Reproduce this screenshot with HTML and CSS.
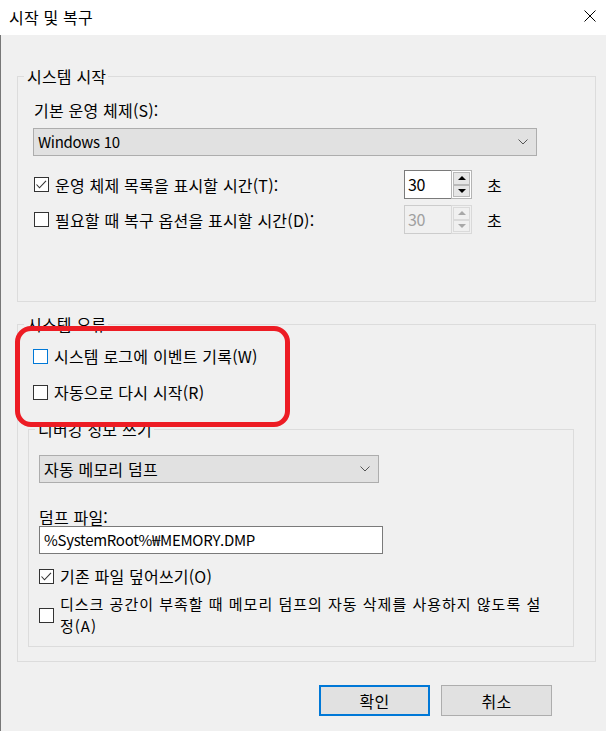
FILE: index.html
```html
<!DOCTYPE html>
<html lang="ko">
<head>
<meta charset="utf-8">
<title>시작 및 복구</title>
<link rel="stylesheet" href="styles.css">
</head>
<body>
<header class="titlebar">
  <span class="title">시작 및 복구</span>
  <svg class="close" width="12" height="12" viewBox="0 0 12 12"><path d="M0.5 0.5L11.5 11.5M11.5 0.5L0.5 11.5" stroke="#000" stroke-width="1" fill="none"/></svg>
</header>
<main class="content">
  <fieldset class="group group-start">
    <legend>시스템 시작</legend>
    <div class="field-label">기본 운영 체제(S):</div>
    <div class="combo combo-os">
      <span class="latin">Windows 10</span>
      <svg class="chev" width="10" height="6" viewBox="0 0 10 6"><path d="M0.5 0.5L5 5L9.5 0.5" stroke="#555" stroke-width="1" fill="none"/></svg>
    </div>
    <div class="spin-row first">
      <div class="check">
        <span class="box"><svg width="13" height="13" viewBox="0 0 13 13"><path d="M1.5 6.5L4.5 9.8L11 2.8" stroke="#333" stroke-width="1.1" fill="none"/></svg></span>
        <span>운영 체제 목록을 표시할 시간(T):</span>
      </div>
      <div class="spin">
        <span class="spin-value latin">30</span>
        <span class="spin-btns">
          <span class="spin-btn"><span class="tri-up"></span></span>
          <span class="spin-btn"><span class="tri-down"></span></span>
        </span>
      </div>
      <span class="unit">초</span>
    </div>
    <div class="spin-row">
      <div class="check">
        <span class="box"></span>
        <span>필요할 때 복구 옵션을 표시할 시간(D):</span>
      </div>
      <div class="spin disabled">
        <span class="spin-value latin">30</span>
        <span class="spin-btns">
          <span class="spin-btn"><span class="tri-up"></span></span>
          <span class="spin-btn"><span class="tri-down"></span></span>
        </span>
      </div>
      <span class="unit">초</span>
    </div>
  </fieldset>

  <fieldset class="group group-error">
    <legend>시스템 오류</legend>
    <div class="check check-row">
      <span class="box hover"></span>
      <span>시스템 로그에 이벤트 기록(W)</span>
    </div>
    <div class="check check-row second">
      <span class="box"></span>
      <span>자동으로 다시 시작(R)</span>
    </div>

    <fieldset class="group group-debug">
      <legend>디버깅 정보 쓰기</legend>
      <div class="combo combo-dump">
        <span>자동 메모리 덤프</span>
        <svg class="chev" width="10" height="6" viewBox="0 0 10 6"><path d="M0.5 0.5L5 5L9.5 0.5" stroke="#555" stroke-width="1" fill="none"/></svg>
      </div>
      <div class="field-label dump-label">덤프 파일:</div>
      <div class="path-input latin">%SystemRoot%₩MEMORY.DMP</div>
      <div class="check check-row overwrite">
        <span class="box"><svg width="13" height="13" viewBox="0 0 13 13"><path d="M1.5 6.5L4.5 9.8L11 2.8" stroke="#333" stroke-width="1.1" fill="none"/></svg></span>
        <span>기존 파일 덮어쓰기(O)</span>
      </div>
      <div class="check multi">
        <span class="box"></span>
        <span class="multi-text">디스크 공간이 부족할 때 메모리 덤프의 자동 삭제를 사용하지 않도록 설<br>정(A)</span>
      </div>
    </fieldset>
  </fieldset>

  <div class="buttons">
    <button class="btn primary" type="button">확인</button>
    <button class="btn" type="button">취소</button>
  </div>
</main>
<div class="annotation"></div>
</body>
</html>
```

FILE: styles.css
```css
* {
  box-sizing: border-box;
}

html,
body {
  margin: 0;
  padding: 0;
}

body {
  width: 606px;
  height: 731px;
  overflow: hidden;
  position: relative;
  background: #f0f0f0;
  color: #000;
  font-family: "Noto Sans CJK KR", "Noto Sans", sans-serif;
  font-size: 16px;
  letter-spacing: 0.2px;
}

.latin {
  font-size: 15px;
  letter-spacing: -0.3px;
}

.titlebar {
  height: 35px;
  background: #fff;
  display: flex;
  align-items: center;
  justify-content: space-between;
  padding: 0 10px 0 9px;
}

.title {
  line-height: 20px;
  margin-top: -2px;
}

.close {
  display: block;
  margin-top: -3px;
}

.content {
  height: 696px;
  border-left: 1px solid #777;
  padding: 32px 10px 0 16px;
}

.group {
  margin: 0;
  border: 1px solid #dcdcdc;
  min-width: 0;
}

.group > legend {
  padding: 0 2px 0 3px;
  line-height: 18px;
  font-size: 16px;
}

.group-start {
  padding: 15px 0 67px 15px;
}

.group-start > legend {
  margin-left: -9px;
}

.field-label {
  line-height: 20px;
  padding-left: 1px;
  margin-bottom: 8px;
}

.combo {
  height: 28px;
  background: #e1e1e1;
  border: 1px solid #adadad;
  display: flex;
  align-items: center;
  justify-content: space-between;
  padding: 0 8px 0 4px;
  line-height: 20px;
}

.chev {
  display: block;
}

.combo-os {
  width: 504px;
}

.combo-dump {
  width: 340px;
}

.spin-row {
  display: grid;
  grid-template-columns: 355px 68px auto;
  column-gap: 15px;
  align-items: center;
  height: 29px;
  margin-top: 6px;
  padding-left: 1px;
}

.spin-row.first {
  margin-top: 14px;
}

.check {
  display: flex;
  align-items: center;
  gap: 6px;
  line-height: 20px;
}

.box {
  width: 15px;
  height: 15px;
  flex: none;
  border: 1px solid #333;
  background: #fff;
  display: flex;
  align-items: center;
  justify-content: center;
}

.box.hover {
  border-color: #0078d7;
}

.box svg {
  display: block;
}

.spin {
  display: flex;
  width: 68px;
  height: 29px;
}

.spin-value {
  flex: 1;
  background: #fff;
  border: 1px solid #7a7a7a;
  border-right: 0;
  padding-left: 3px;
  line-height: 26px;
  font-size: 16px;
}

.spin-btns {
  width: 21px;
  display: flex;
  flex-direction: column;
  padding: 1px;
  border: 1px solid #b4b4b4;
  background: #fff;
}

.spin-btn {
  flex: 1;
  background: #e6e6e6;
  border: 1px solid #b9b9b9;
  display: flex;
  align-items: center;
  justify-content: center;
}

.tri-up {
  width: 0;
  height: 0;
  border-left: 4px solid transparent;
  border-right: 4px solid transparent;
  border-bottom: 4px solid #000;
}

.tri-down {
  width: 0;
  height: 0;
  border-left: 4px solid transparent;
  border-right: 4px solid transparent;
  border-top: 4px solid #000;
}

.spin.disabled .spin-value {
  background: #f0f0f0;
  border-color: #cccccc;
  color: #a0a0a0;
}

.spin.disabled .spin-btns {
  background: #f0f0f0;
  border-color: #d9d9d9;
}

.spin.disabled .spin-btn {
  background: #f0f0f0;
  border-color: #dadada;
}

.spin.disabled .tri-up {
  border-bottom-color: #a8a8a8;
}

.spin.disabled .tri-down {
  border-top-color: #a8a8a8;
}

.unit {
  line-height: 20px;
}

.group-error {
  margin-top: 13px;
  padding: 12px 21px 14px 10px;
}

.group-error > legend {
  margin-left: -4px;
}

.check-row {
  height: 22px;
  margin-left: 5px;
}

.check-row.second {
  margin-top: 14px;
}

.group-debug {
  margin-top: 17px;
  padding: 17px 10px 9px 10px;
}

.group-debug > legend {
  margin-left: -4px;
}

.group-debug .check-row {
  margin-left: 0;
}

.dump-label {
  line-height: 18px;
  margin: 25px 0 0;
  padding-left: 0;
}

.path-input {
  width: 344px;
  height: 28px;
  background: #fff;
  border: 1px solid #7a7a7a;
  padding-left: 4px;
  line-height: 26px;
}

.check-row.overwrite {
  margin-top: 11px;
}

.multi {
  margin-top: 6px;
}

.multi-text {
  font-size: 15px;
  letter-spacing: 1px;
  line-height: 22px;
}

.buttons {
  display: flex;
  justify-content: flex-end;
  gap: 11px;
  margin-top: 23px;
  margin-right: 44px;
}

.btn {
  width: 111px;
  height: 31px;
  margin: 0;
  padding: 0;
  background: #e1e1e1;
  border: 1px solid #adadad;
  font-family: inherit;
  font-size: 16px;
  letter-spacing: 0.2px;
  color: #000;
  line-height: 20px;
}

.btn.primary {
  border: 2px solid #0078d7;
}

.annotation {
  position: absolute;
  left: 15px;
  top: 326px;
  width: 275px;
  height: 101px;
  border: 5px solid #ed1c24;
  border-radius: 16px;
  pointer-events: none;
}
```
